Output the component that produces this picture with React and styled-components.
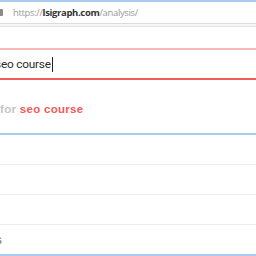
import styled, { createGlobalStyle } from "styled-components";

const GlobalStyle = createGlobalStyle`
  html, body {
    margin: 0;
    padding: 0;
    background: #ffffff;
    overflow: hidden;
  }
`;

const Page = styled.div`
  width: 256px;
  height: 256px;
  display: flex;
  flex-direction: column;
  overflow: hidden;
  background: #ffffff;
`;

const AddressBar = styled.div`
  height: 22px;
  border-top: 2px solid #a9cdee;
  border-bottom: 1px solid #dcdcdc;
  display: flex;
  align-items: center;
  gap: 10px;
  font-family: "Open Sans", sans-serif;
  font-size: 9.5px;
  letter-spacing: -0.35px;
  color: #9a9a9a;
`;

const Lock = styled.span`
  width: 3px;
  height: 7px;
  background: #8a8a8a;
  border-radius: 0 1px 1px 0;
`;

const Host = styled.b`
  color: #333333;
  font-weight: 700;
`;

const ToolStrip = styled.div`
  height: 2px;
  border-bottom: 1px solid #e4e4e4;
  background: #f6f6f6;
`;

const SearchBox = styled.div`
  margin-top: 21px;
  height: 29px;
  border-top: 2px solid #f8b8b8;
  border-bottom: 2px solid #f25a5a;
  display: flex;
  align-items: center;
  overflow: hidden;
  font-family: "Roboto", sans-serif;
  font-size: 11.8px;
  letter-spacing: -0.2px;
  color: #2c2c2c;
`;

const Typed = styled.span`
  margin-left: -5px;
`;

const Caret = styled.span`
  width: 1px;
  height: 15px;
  margin-left: 1px;
  background: #222222;
`;

const Heading = styled.div`
  margin-top: 23px;
  font-family: "Liberation Sans", sans-serif;
  font-size: 11.5px;
  font-weight: 700;
  letter-spacing: 0.3px;
  color: #c4c4c4;
`;

const Query = styled.span`
  color: #f25a5a;
`;

const Table = styled.div`
  margin-top: 18px;
  border-top: 2px solid #a9cdee;
  display: flex;
  flex-direction: column;
`;

const Row = styled.div`
  height: 29px;
  border-bottom: ${({ last }) => (last ? "2px solid #a9cdee" : "1px solid #ededed")};
  display: flex;
  align-items: center;
  overflow: hidden;
  font-family: "Liberation Sans", sans-serif;
  font-size: 12px;
  font-weight: 700;
  color: #8c8c8c;
`;

const Cut = styled.span`
  margin-left: -8px;
`;

const App = () => {
  return (
    <Page>
      <GlobalStyle />
      <AddressBar>
        <Lock />
        <span>
          https://<Host>lsigraph.com</Host>/analysis/
        </span>
      </AddressBar>
      <ToolStrip />
      <SearchBox>
        <Typed>seo course</Typed>
        <Caret />
      </SearchBox>
      <Heading>
        for <Query>seo course</Query>
      </Heading>
      <Table>
        <Row />
        <Row />
        <Row />
        <Row last>
          <Cut>ls</Cut>
        </Row>
      </Table>
    </Page>
  );
};

export default App;
